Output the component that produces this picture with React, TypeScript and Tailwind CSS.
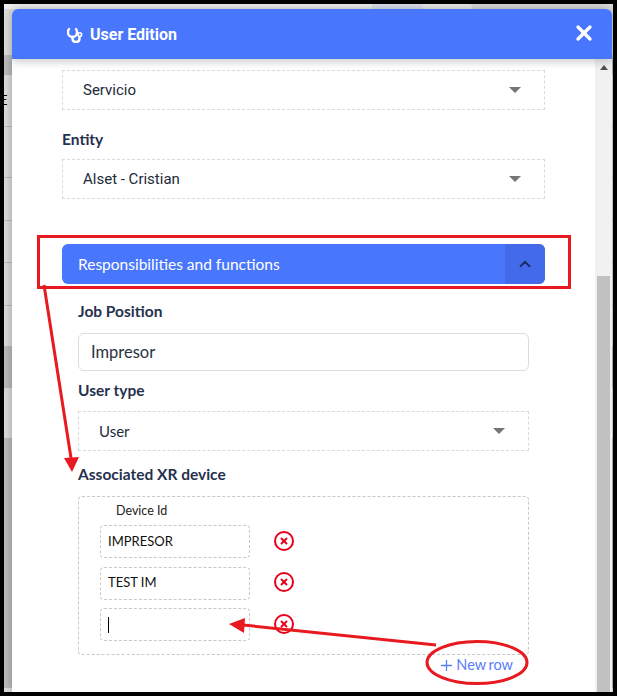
import { ChevronUp, Plus, X } from 'lucide-react'

const roboto = "font-['Roboto',sans-serif]"
const lato = "font-['Lato',sans-serif]"
const label = 'text-[15.5px] leading-[18px] font-bold text-[#26314d]'

function Caret() {
  return <span className="h-0 w-0 border-x-[6px] border-t-[6px] border-x-transparent border-t-[#757575]" />
}

function SelectBox({ value, className }: { value: string; className: string }) {
  return (
    <div className={`flex h-10 items-center justify-between border border-dashed border-[#d9d9d9] pr-[23px] pl-[20px] ${className}`}>
      <span>{value}</span>
      <Caret />
    </div>
  )
}

function DeviceRow({ value, caret }: { value?: string; caret?: boolean }) {
  return (
    <div className="flex items-center">
      <div className="flex h-[33px] w-[150px] items-center rounded border border-dashed border-[#c8c8c8] px-[7px] text-[13px] text-[#111]">
        {value}
        {caret && <span className="h-[16px] w-px bg-black" />}
      </div>
      <span className="mb-[2px] ml-6 flex h-5 w-5 items-center justify-center rounded-full border-2 border-[#e8001c]">
        <X size={10} strokeWidth={4.5} className="text-[#e8001c]" />
      </span>
    </div>
  )
}

export default function App() {
  return (
    <div className={`relative h-[696px] w-[617px] overflow-hidden bg-black ${lato}`}>
      {/* page behind the modal */}
      <div className="absolute top-1 right-[4px] bottom-1 left-1 overflow-hidden bg-[#dedede]">
        <div className="flex h-[51px] items-start">
          <div className="h-[5px] w-[368px] bg-[#f2f2f2]" />
          <div className="h-[12px] w-[51px] bg-[#dfe5f2] pt-[3px] text-center text-[10px] leading-3 text-[#555]">ADMIN</div>
          <div className="h-[5px] w-[50px] rounded-tr-md bg-[#efefef]" />
        </div>
        <div className="h-5 bg-[#bdbdbd]" />
        <div className="-ml-1 h-[51px] pt-[19px] text-[13px] leading-3 text-black">E</div>
        <div className="h-[51px] border-t border-[#bcbcbc]" />
        <div className="h-[43px] border-t border-[#bcbcbc]" />
        <div className="h-[42px] border-t border-[#bcbcbc]" />
        <div className="h-[43px] border-t border-[#bcbcbc]" />
        <div className="h-[41px] border-t border-[#bcbcbc]" />
        <div className="h-[42px] bg-[#bdbdbd]" />
        <div className="h-[50px]" />
        <div className="h-[250px] bg-[#bdbdbd]" />
      </div>

      {/* modal */}
      <div className="absolute top-[9px] left-3 flex h-[683px] w-[600px] flex-col overflow-hidden rounded-t-md bg-white shadow-[0_0_12px_rgba(0,0,0,0.3)]">
        <header className="relative z-10 flex h-[50px] shrink-0 items-center justify-between bg-[#4876fd] pr-[16.5px] pl-[55px] shadow-[0_3px_8px_rgba(0,0,0,0.2)]">
          <div className={`flex items-center gap-[7px] pt-[2px] text-base font-bold text-white ${roboto}`}>
            <svg width="16" height="16" viewBox="0 0 16 16" fill="none" stroke="currentColor" strokeWidth="2.4" strokeLinecap="round">
              <path d="M2 2 C1 3 1 4 1 5.5 C1 8 3 10 5.5 10 C8 10 10 8 10 5.5 C10 4 10 3 9 2" />
              <path d="M5.5 10 V11.5 C5.5 13.5 7 15 9 15 C11 15 12.5 13.5 12.5 11.5 V10" />
              <circle cx="12.8" cy="7.5" r="1.8" strokeWidth="1.6" />
            </svg>
            User Edition
          </div>
          <X size={24} strokeWidth={3.3} className="mb-[2px] text-white" />
        </header>

        <div className="flex min-h-0 flex-1">
          <div className="min-w-0 flex-1 pt-[11px] pr-[50px] pl-[50px]">
            <SelectBox value="Servicio" className={`text-[15px] text-[#222b3a] ${roboto}`} />
            <p className={`mt-5 mb-[11px] ${label}`}>Entity</p>
            <SelectBox value="Alset - Cristian" className={`text-[15px] text-[#222b3a] ${roboto}`} />

            <div className="mt-[45px] flex h-10 items-center justify-between overflow-hidden rounded-md bg-[#4876fd] pl-4 text-[15.5px] text-white">
              <span className="pt-[2px]">Responsibilities and functions</span>
              <span className="flex h-full w-10 items-center justify-center bg-[#436ae9]">
                <ChevronUp size={18} strokeWidth={2.4} className="text-[#1c2d66]" />
              </span>
            </div>

            <div className="pr-4 pl-4">
              <p className={`mt-[18px] ${label}`}>Job Position</p>
              <div className="mt-[13px] flex h-[38px] items-center rounded-md border border-[#dcdcdc] pl-3 text-[16.5px] text-[#2b3340]">Impresor</div>
              <p className={`mt-[10px] ${label}`}>User type</p>
              <SelectBox value="User" className="mt-[12px] text-[15px] text-[#222b3a]" />
              <p className={`mt-[14px] ${label}`}>Associated XR device</p>

              <div className="mt-[13px] h-[159px] rounded border border-dashed border-[#c8c8c8] pt-[7px] pl-[21px]">
                <p className="pl-[16px] text-[12.5px] leading-[14px] text-[#222]">Device Id</p>
                <div className="mt-[7px] flex flex-col gap-[8.5px]">
                  <DeviceRow value="IMPRESOR" />
                  <DeviceRow value="TEST IM" />
                  <DeviceRow caret />
                </div>
              </div>
              <div className="flex h-5 items-center justify-end gap-px pr-4 text-[14.5px] text-[#5b7cfa] [word-spacing:-1px]">
                <Plus size={17} strokeWidth={1.8} />
                New row
              </div>
            </div>
          </div>

          <div className="flex w-[17px] shrink-0 flex-col bg-[#f1f1f1]">
            <div className="flex h-[17px] items-center justify-center">
              <span className="h-0 w-0 border-x-4 border-b-[5px] border-x-transparent border-b-[#505050]" />
            </div>
            <div className="mx-[2px] mt-[200px] flex-1 bg-[#c1c1c1]" />
          </div>
        </div>
      </div>

      {/* screenshot annotations */}
      <svg className="pointer-events-none absolute inset-0" width="617" height="696" fill="none">
        <rect x="38.5" y="236.5" width="531" height="51" stroke="#e8191f" strokeWidth="3" />
        <path d="M44 285 L71 458" stroke="#e8191f" strokeWidth="3" />
        <path d="M64 458 L79 457 L72 472 Z" fill="#e8191f" />
        <path d="M436 645 L243 625" stroke="#e8191f" strokeWidth="3" />
        <path d="M229 624 L245 618 L244 633 Z" fill="#e8191f" />
        <ellipse cx="477" cy="662.5" rx="50" ry="21" stroke="#e8191f" strokeWidth="3" />
      </svg>
    </div>
  )
}
